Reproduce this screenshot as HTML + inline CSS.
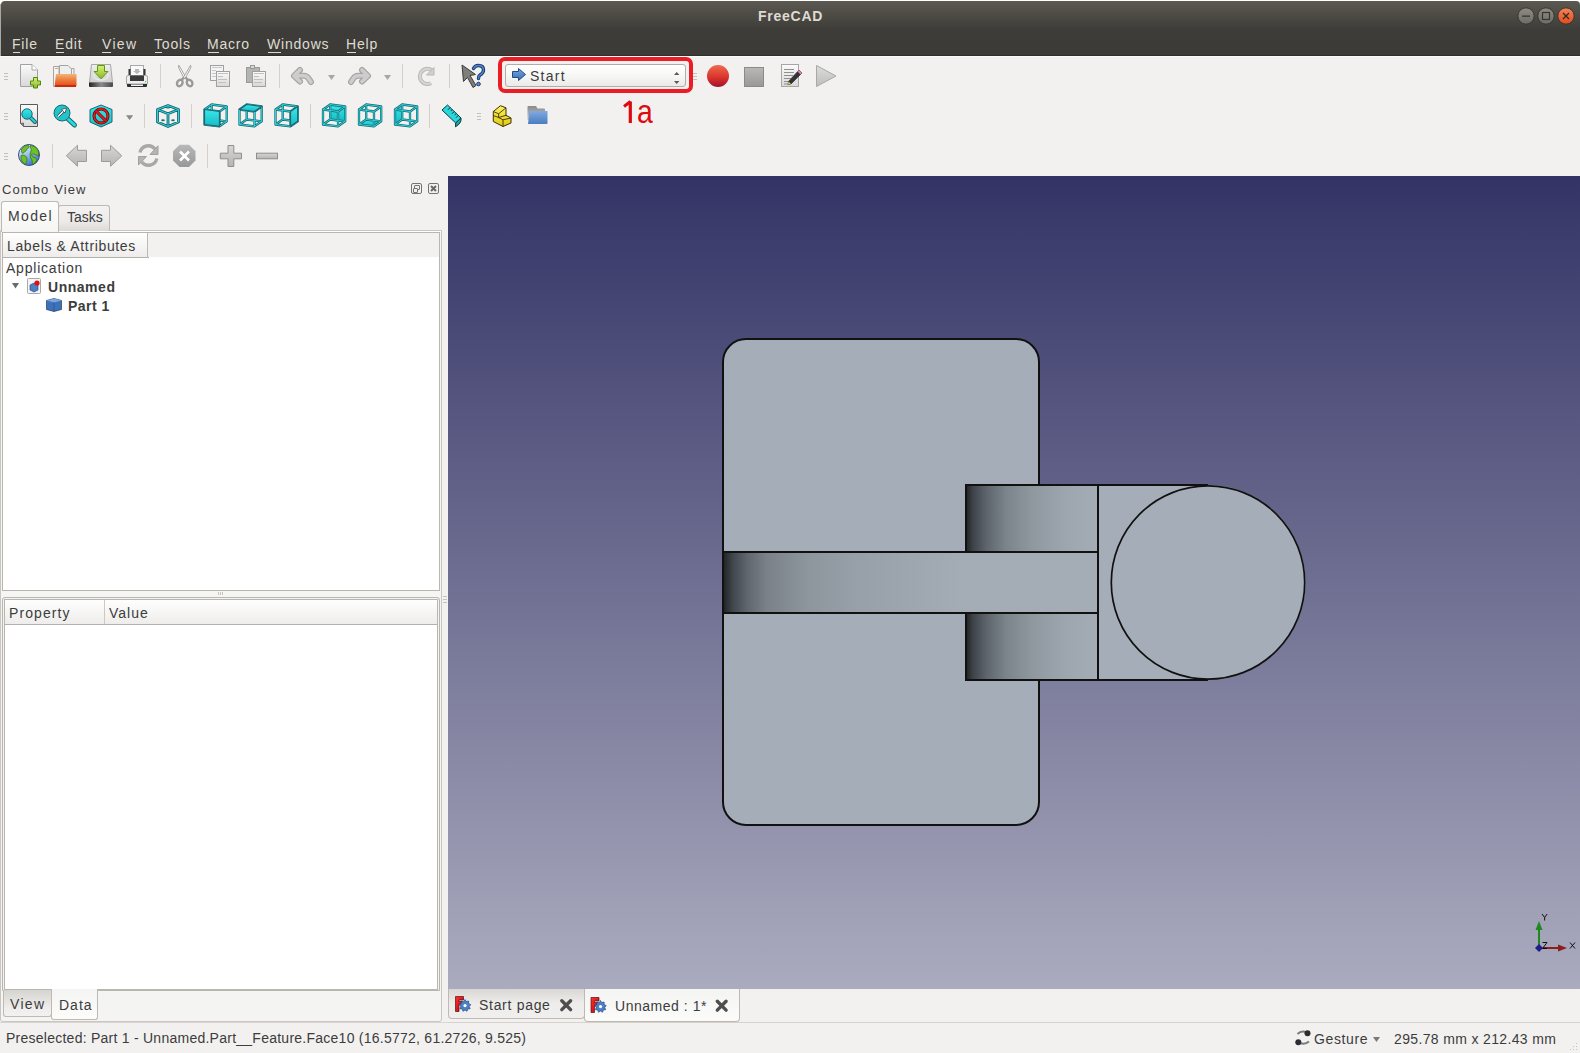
<!DOCTYPE html>
<html><head><meta charset="utf-8">
<style>
*{margin:0;padding:0;box-sizing:border-box;}
html,body{width:1580px;height:1053px;overflow:hidden;background:#fff;}
body{font-family:"Liberation Sans",sans-serif;position:relative;}
.a{position:absolute;}
.t{position:absolute;white-space:nowrap;line-height:1;color:#3c3c3c;}
#title{left:1px;top:1px;width:1579px;height:55px;border-radius:4px 4px 0 0;
 background:linear-gradient(#5b5950 0px,#4d4b45 14px,#3d3c38 29px,#3c3b37 55px);}
#tb{left:0;top:56px;width:1580px;height:120px;background:#f2f1f0;}
#left{left:0;top:176px;width:448px;height:846px;background:#f2f1f0;}
#view{left:448px;top:176px;width:1132px;height:813px;background:linear-gradient(#333366,#ababbf);}
#tabbar{left:448px;top:989px;width:1132px;height:33px;background:#f2f1f0;}
#status{left:0;top:1022px;width:1580px;height:31px;background:#f2f1f0;border-top:1px solid #d9d6d1;}
.menu{color:#dfdbd2;font-size:14px;letter-spacing:0.8px;}
.u{position:absolute;height:1px;background:#dfdbd2;top:52px;}

.ln{position:absolute;background:#b9b5af;}
.hdr{background:linear-gradient(#fefefe,#eeedeb);}
</style></head><body>
<div id="title" class="a"></div>
<div id="tb" class="a"></div>
<div class="a" style="left:0;top:4px;width:1px;height:52px;background:#a9a8a4;"></div>
<div class="a" style="left:1px;top:55px;width:1579px;height:1px;background:#2f2e2b;"></div>
<div class="a" style="left:0;top:56px;width:1580px;height:1px;background:#fbfbfa;"></div>

<div id="left" class="a"></div>
<div id="view" class="a"></div>
<div id="tabbar" class="a"></div>
<div id="status" class="a"></div>


<!-- left panel structure -->
<div class="a" style="left:0;top:230px;width:442px;height:792px;border:1px solid #c9c6c1;border-radius:0 0 3px 3px;background:#f4f4f3;"></div>
<div class="a" style="left:1px;top:231px;width:440px;height:1px;background:#fff;"></div>
<!-- Model tab -->
<div class="a" style="left:1px;top:201px;width:58px;height:31px;border:1px solid #bdb9b3;border-bottom:none;border-radius:3px 3px 0 0;background:linear-gradient(#fcfcfb,#f5f5f4);"></div>
<!-- Tasks tab -->
<div class="a" style="left:58px;top:205px;width:52px;height:26px;border:1px solid #bdb9b3;border-bottom:none;border-radius:3px 3px 0 0;background:linear-gradient(#f4f3f2 0%,#ecebe9 60%,#dcdad6 100%);"></div>
<!-- tree frame -->
<div class="a" style="left:2px;top:232px;width:438px;height:359px;border:1px solid #b9b5af;background:#fff;"></div>
<div class="a" style="left:3px;top:233px;width:436px;height:24px;background:#f2f1f0;"></div>
<div class="a hdr" style="left:3px;top:233px;width:145px;height:24px;border-right:1px solid #bdb9b3;"></div>
<div class="a" style="left:3px;top:257px;width:146px;height:1px;background:#b4b0aa;"></div>
<!-- splitter -->
<div class="a" style="left:1px;top:591px;width:440px;height:6px;background:#f5f5f4;"></div>
<div class="a" style="left:218px;top:592px;width:1px;height:3px;background:#c8c5c0;"></div>
<div class="a" style="left:220px;top:592px;width:1px;height:3px;background:#c8c5c0;"></div>
<div class="a" style="left:222px;top:592px;width:1px;height:3px;background:#c8c5c0;"></div>
<!-- property frame -->
<div class="a" style="left:2px;top:597px;width:438px;height:394px;border:1px solid #b9b5af;border-radius:3px 3px 0 0;background:#f4f4f3;"></div>
<div class="a" style="left:4px;top:599px;width:434px;height:391px;border:1px solid #b9b5af;background:#fff;"></div>
<div class="a hdr" style="left:5px;top:600px;width:432px;height:24px;"></div>
<div class="a" style="left:5px;top:624px;width:432px;height:1px;background:#b4b0aa;"></div>
<div class="a" style="left:104px;top:600px;width:1px;height:24px;background:#ccc9c4;"></div>
<!-- bottom tabs -->
<div class="a" style="left:3px;top:990px;width:49px;height:27px;border:1px solid #bdb9b3;border-top:none;border-radius:0 0 3px 3px;background:linear-gradient(#d6d4d0,#efeeec 70%,#f2f1f0);"></div>
<div class="a" style="left:51px;top:989px;width:47px;height:31px;border:1px solid #bdb9b3;border-top:none;border-radius:0 0 3px 3px;background:linear-gradient(#f4f4f3,#fcfcfb);"></div>
<!-- dock title buttons -->
<div class="a" style="left:411px;top:183px;width:11px;height:11px;border:1px solid #77746f;border-radius:2px;"></div>
<div class="a" style="left:414px;top:185px;width:6px;height:5px;border:1px solid #77746f;border-radius:1px;"></div>
<div class="a" style="left:413px;top:188px;width:5px;height:5px;border:1px solid #77746f;border-radius:1px;background:#f2f1f0;"></div>
<div class="a" style="left:428px;top:183px;width:11px;height:11px;border:1px solid #77746f;border-radius:2px;"></div>
<svg class="a" style="left:428px;top:183px;" width="11" height="11"><path d="M3 3L8 8M8 3L3 8" stroke="#6b6863" stroke-width="2"/></svg>
<!-- panel right splitter grip -->
<div class="a" style="left:443px;top:596px;width:4px;height:1px;background:#c4c1bc;"></div>
<div class="a" style="left:443px;top:599px;width:4px;height:1px;background:#c4c1bc;"></div>
<div class="a" style="left:443px;top:602px;width:4px;height:1px;background:#c4c1bc;"></div>
<!-- 3D view tabs -->
<div class="a" style="left:448px;top:989px;width:137px;height:30px;border:1px solid #bdb9b3;border-top:none;border-radius:0 0 4px 4px;background:linear-gradient(#d9d7d3,#eeedeb 50%,#f0efed);"></div>
<div class="a" style="left:584px;top:989px;width:156px;height:33px;border:1px solid #bdb9b3;border-top:none;border-radius:0 0 4px 4px;background:linear-gradient(#f4f4f3,#fbfbfa);"></div>
<div class="a" style="left:448px;top:1022px;width:1132px;height:1px;background:#d5d2cd;"></div>


<!-- 3D model -->
<svg class="a" style="left:0;top:0;" width="1580" height="1053" viewBox="0 0 1580 1053">
<defs>
<linearGradient id="gs" gradientUnits="userSpaceOnUse" x1="723" y1="0" x2="965" y2="0">
<stop offset="0" stop-color="#1f2224"/>
<stop offset="0.04" stop-color="#41464b"/>
<stop offset="0.1" stop-color="#5f666e"/>
<stop offset="0.18" stop-color="#7a8189"/>
<stop offset="0.35" stop-color="#8d959d"/>
<stop offset="0.55" stop-color="#97a0a8"/>
<stop offset="1" stop-color="#a4adb6"/>
</linearGradient>
<linearGradient id="gc" gradientUnits="userSpaceOnUse" x1="966" y1="0" x2="1098" y2="0">
<stop offset="0" stop-color="#1f2224"/>
<stop offset="0.05" stop-color="#3d4247"/>
<stop offset="0.15" stop-color="#5c636b"/>
<stop offset="0.3" stop-color="#7b838b"/>
<stop offset="0.5" stop-color="#8f979f"/>
<stop offset="0.75" stop-color="#9da6ae"/>
<stop offset="1" stop-color="#a4adb6"/>
</linearGradient>
</defs>
<rect x="723" y="339" width="316" height="486" rx="23" ry="23" fill="#a5aeb8" stroke="#111" stroke-width="2"/>
<path d="M966 485 H1208 A97.5 97.5 0 0 1 1208 680 H966 Z" fill="#a5aeb8"/>
<path d="M965 485 H1208 M965 680 H1208" stroke="#111" stroke-width="2"/>
<rect x="967" y="486" width="130" height="65" fill="url(#gc)"/>
<rect x="967" y="614" width="130" height="65" fill="url(#gc)"/>
<rect x="724" y="553" width="373" height="59" fill="url(#gs)"/>
<g fill="none" stroke="#111" stroke-width="2">
<path d="M722 552 H1098 M722 613 H1098 M1098 484 V681 M966 485 V552 M966 613 V680 M723 552 V613"/>
</g>
<circle cx="1208" cy="582.5" r="96.7" fill="none" stroke="#111" stroke-width="1.7"/>
</svg>

<svg class="a" style="left:0;top:0;" width="1580" height="200" viewBox="0 0 1580 200">
<defs>
<linearGradient id="pg" x1="0" y1="0" x2="0" y2="1"><stop offset="0" stop-color="#fbfbfb"/><stop offset="1" stop-color="#d8d8d8"/></linearGradient>
<linearGradient id="grn" x1="0" y1="0" x2="0" y2="1"><stop offset="0" stop-color="#d8f070"/><stop offset="1" stop-color="#8ab828"/></linearGradient>
<linearGradient id="org" x1="0" y1="0" x2="0" y2="1"><stop offset="0" stop-color="#f2b47a"/><stop offset="0.5" stop-color="#ec7a3a"/><stop offset="1" stop-color="#e2481a"/></linearGradient>
<linearGradient id="drv" x1="0" y1="0" x2="0" y2="1"><stop offset="0" stop-color="#f0f0f0"/><stop offset="1" stop-color="#cfcfcf"/></linearGradient>
<linearGradient id="drb" x1="0" y1="0" x2="1" y2="0"><stop offset="0" stop-color="#222"/><stop offset="0.5" stop-color="#8a8a8a"/><stop offset="1" stop-color="#4a4a4a"/></linearGradient>
<linearGradient id="gry" x1="0" y1="0" x2="0" y2="1"><stop offset="0" stop-color="#d6d6d6"/><stop offset="1" stop-color="#b4b4b4"/></linearGradient>
<linearGradient id="rec" x1="0" y1="0" x2="0" y2="1"><stop offset="0" stop-color="#ee6a50"/><stop offset="0.6" stop-color="#d8302a"/><stop offset="1" stop-color="#a01030"/></linearGradient>
<linearGradient id="stp" x1="0" y1="0" x2="0" y2="1"><stop offset="0" stop-color="#b8b8b8"/><stop offset="1" stop-color="#989898"/></linearGradient>
<linearGradient id="ply" x1="0" y1="0" x2="0" y2="1"><stop offset="0" stop-color="#dcdcdc"/><stop offset="1" stop-color="#bdbdbd"/></linearGradient>
<linearGradient id="blu" x1="0" y1="0" x2="0" y2="1"><stop offset="0" stop-color="#7aa8e0"/><stop offset="1" stop-color="#3a6ab0"/></linearGradient>
<linearGradient id="glb" x1="0.2" y1="0.1" x2="0.7" y2="1"><stop offset="0" stop-color="#e8f2fc"/><stop offset="0.5" stop-color="#8ab8e8"/><stop offset="1" stop-color="#2a68b8"/></linearGradient>
<linearGradient id="tl" x1="0" y1="0" x2="0" y2="1"><stop offset="0" stop-color="#3ae4ea"/><stop offset="1" stop-color="#14b8c0"/></linearGradient>
<linearGradient id="fld" x1="0" y1="0" x2="0" y2="1"><stop offset="0" stop-color="#80aae0"/><stop offset="1" stop-color="#4a7cc0"/></linearGradient>
<linearGradient id="fldb" x1="0" y1="0" x2="0" y2="1"><stop offset="0" stop-color="#8a8a8a"/><stop offset="1" stop-color="#c8c8c8"/></linearGradient>
<linearGradient id="yel" x1="0" y1="0" x2="0" y2="1"><stop offset="0" stop-color="#fff060"/><stop offset="1" stop-color="#e0c810"/></linearGradient>
</defs>
<!-- grips -->
<g fill="#c3c0bb">
<rect x="4" y="73" width="4" height="1"/><rect x="4" y="76" width="4" height="1"/><rect x="4" y="79" width="4" height="1"/>
<rect x="4" y="113" width="4" height="1"/><rect x="4" y="116" width="4" height="1"/><rect x="4" y="119" width="4" height="1"/>
<rect x="4" y="153" width="4" height="1"/><rect x="4" y="156" width="4" height="1"/><rect x="4" y="159" width="4" height="1"/>
<rect x="477" y="113" width="4" height="1"/><rect x="477" y="116" width="4" height="1"/><rect x="477" y="119" width="4" height="1"/>
<rect x="693" y="73" width="4" height="1"/><rect x="693" y="76" width="4" height="1"/><rect x="693" y="79" width="4" height="1"/>
</g>
<!-- separators -->
<g fill="#d3d0cb">
<rect x="160" y="64" width="1" height="24"/><rect x="279" y="64" width="1" height="24"/><rect x="402" y="64" width="1" height="24"/><rect x="449" y="64" width="1" height="24"/>
<rect x="144" y="104" width="1" height="24"/><rect x="191" y="104" width="1" height="24"/><rect x="310" y="104" width="1" height="24"/><rect x="429" y="104" width="1" height="24"/>
<rect x="52" y="144" width="1" height="24"/><rect x="207" y="144" width="1" height="24"/>
</g>
<!-- New -->
<path d="M20.5 64.5 H32 L37.5 70 V86.5 H20.5 Z" fill="url(#pg)" stroke="#a2a2a2"/>
<path d="M32 64.5 V70 H37.5" fill="#fff" stroke="#a8a8a8"/>
<path d="M33.5 77.5 H37.5 V81 H40.5 V85 H37.5 V88 H33.5 V85 H30.5 V81 H33.5 Z" fill="url(#grn)" stroke="#4e8a10"/>
<!-- Open -->
<path d="M53.5 66.5 H59 V86.5 H53.5 Z" fill="#f4f4f4" stroke="#a4a4a4"/>
<rect x="55" y="68" width="3" height="1" fill="#f0a040"/>
<path d="M59.5 65.5 H68 L71.5 69 V76 H59.5 Z" fill="#eeeeee" stroke="#a4a4a4"/>
<path d="M71.5 68.5 H74 V76" fill="none" stroke="#a4a4a4"/>
<path d="M56 74 H76.5 V85.5 Q76.5 86.5 75.5 86.5 H54.5 Z" fill="url(#org)"/>
<rect x="55" y="85" width="21" height="2" fill="#c82a10"/>
<!-- Save -->
<path d="M91.5 64.5 H110.5 L112.5 82.5 H89.5 Z" fill="url(#drv)" stroke="#a8a8a8"/>
<path d="M89 82.5 H113 V86 Q113 87 112 87 H90 Q89 87 89 86 Z" fill="url(#drb)"/>
<ellipse cx="101" cy="76" rx="7" ry="4" fill="none" stroke="#e8e8e8" stroke-width="1.5"/>
<path d="M97.5 65.5 H104.5 V71.5 H108 L101 78.8 L94 71.5 H97.5 Z" fill="url(#grn)" stroke="#5a9a10"/>
<!-- Print -->
<rect x="130.5" y="65.5" width="13" height="10" fill="#fafafa" stroke="#a8a8a8"/>
<path d="M135 69 H139 V71 H141 L137 74 L133 71 H135 Z" fill="#b8b8b8"/>
<rect x="128.5" y="69" width="2" height="6" fill="#333"/><rect x="143.5" y="69" width="2" height="6" fill="#333"/>
<path d="M126.5 77 Q126.5 75.5 128 75.5 H146 Q147.5 75.5 147.5 77 V84 H126.5 Z" fill="#eeeeee" stroke="#a8a8a8"/>
<rect x="130" y="75.5" width="14" height="5.5" fill="#3a3a3a"/>
<path d="M127 84 H147 V86 Q147 87 146 87 H128 Q127 87 127 86 Z" fill="#2e2e2e"/>
<rect x="131" y="84.5" width="12" height="1.5" fill="#f4f4f4"/>
<rect x="145" y="81" width="1.2" height="1.2" fill="#50d030"/>
<!-- Cut -->
<path d="M178.8 65.2 Q178 66.5 179 68.5 L184.2 78.5 L186.2 77.8 Z" fill="#f8f8f8" stroke="#9c9c9c" stroke-width="0.9" stroke-linejoin="round"/>
<path d="M190.6 65.2 Q191.4 66.5 190.4 68.5 L185.2 78.5 L183.2 77.8 Z" fill="#f8f8f8" stroke="#9c9c9c" stroke-width="0.9" stroke-linejoin="round"/>
<g fill="none" stroke="#9a9a9a" stroke-width="2.4">
<ellipse cx="179.8" cy="83" rx="2.6" ry="3.4" transform="rotate(30 179.8 83)"/>
<ellipse cx="189.6" cy="83" rx="2.6" ry="3.4" transform="rotate(-30 189.6 83)"/>
<path d="M181.5 79.8 L184 77.5 M187.9 79.8 L185.4 77.5"/>
</g>
<!-- Copy -->
<rect x="210.5" y="65.5" width="13" height="15" fill="#f4f4f4" stroke="#a0a0a0"/>
<g stroke="#c8c8c8"><path d="M212 67.5 H222 M212 70.5 H216 M212 73.5 H216 M212 76.5 H216"/></g>
<rect x="216.5" y="71.5" width="13" height="15" fill="url(#pg)" stroke="#a0a0a0"/>
<g stroke="#c0c0c0"><path d="M218 73.5 H228 M218 76.5 H223 M218 79.5 H227 M218 82.5 H226"/></g>
<!-- Paste -->
<rect x="246.5" y="67.5" width="13" height="15" fill="#b4b4b4" stroke="#999"/>
<rect x="250.5" y="65.5" width="4" height="3" fill="#d8d8d8" stroke="#999"/>
<rect x="252.5" y="71.5" width="13" height="15" fill="url(#pg)" stroke="#a0a0a0"/>
<g stroke="#c0c0c0"><path d="M254 73.5 H264 M254 76.5 H259 M254 79.5 H263 M254 82.5 H262"/></g>
<!-- Undo / Redo -->
<g fill="none" stroke-linecap="round" stroke-linejoin="round">
<path d="M300 70 L294 75.8 L300 81.5 M295 75.8 H304 Q307 75.8 309 79 L311 82" stroke="#a6a6a6" stroke-width="6"/>
<path d="M300 70 L294 75.8 L300 81.5 M295 75.8 H304 Q307 75.8 309 79 L311 82" stroke="#cdcdcd" stroke-width="3.6"/>
<path d="M362 70 L368 75.8 L362 81.5 M367 75.8 H358 Q355 75.8 353 79 L351 82" stroke="#a6a6a6" stroke-width="6"/>
<path d="M362 70 L368 75.8 L362 81.5 M367 75.8 H358 Q355 75.8 353 79 L351 82" stroke="#cdcdcd" stroke-width="3.6"/>
</g>
<path d="M328 75 H335 L331.5 80 Z" fill="#aaa7a3"/>
<path d="M384 75 H391 L387.5 80 Z" fill="#aaa7a3"/>
<!-- Refresh (disabled) -->
<path d="M432 70.5 A7.5 7.5 0 1 0 431 83" fill="none" stroke="#b8b8b8" stroke-width="4.2"/>
<path d="M432 70.5 A7.5 7.5 0 1 0 431 83" fill="none" stroke="#d4d4d4" stroke-width="2.2"/>
<path d="M434 67.5 V75 H426.5 Z" fill="#cfcfcf" stroke="#b8b8b8" stroke-linejoin="round"/>
<!-- What's this -->
<path d="M462 65 L475.5 74.5 L470 75.5 L476 85.5 L473 87.5 L467.5 77.5 L463.5 81.5 Z" fill="#7e7e7a" stroke="#3a3a38" stroke-linejoin="round"/>
<path d="M473.5 68.5 Q475 65.5 478.5 65.5 Q483.5 65.5 483.5 70 Q483.5 73 480 75 Q478.5 76 478.5 78.5" fill="none" stroke="#1a3a70" stroke-width="3.4" stroke-linecap="round"/>
<path d="M473.5 68.5 Q475 65.5 478.5 65.5 Q483.5 65.5 483.5 70 Q483.5 73 480 75 Q478.5 76 478.5 78.5" fill="none" stroke="#4f86cc" stroke-width="1.3" stroke-linecap="round"/>
<circle cx="478.5" cy="84" r="1.8" fill="#5a8ed0" stroke="#1a3a70"/>
<!-- Record / Stop / Editor / Play -->
<circle cx="718" cy="76" r="11" fill="url(#rec)"/>
<rect x="744.5" y="67.5" width="19" height="19" fill="url(#stp)" stroke="#8a8a8a"/>
<rect x="781.5" y="64.5" width="17" height="22" fill="url(#pg)" stroke="#a6a6a6"/>
<g stroke="#909090"><path d="M784 69.5 H794 M784 72.5 H794 M784 75.5 H793 M784 78.5 H791 M784 81.5 H789 M784 84 H788"/></g>
<path d="M799 70 L802 73 L791 84 L788 84.5 L788.5 81.5 Z" fill="#333" stroke="#222" stroke-width="0.6"/>
<path d="M799 70 L802 73 L800.5 74.5 L797.5 71.5 Z" fill="#e080c0"/>
<path d="M788 84.5 L788.5 81.5 L791 84 Z" fill="#f0d060"/>
<path d="M816.5 65.5 L836 76 L816.5 86.5 Z" fill="url(#ply)" stroke="#a8a8a8" stroke-linejoin="round"/>
</svg>
<svg class="a" style="left:0;top:0;" width="1580" height="200" viewBox="0 0 1580 200">
<defs>
<linearGradient id="tl2" x1="0" y1="0" x2="0" y2="1"><stop offset="0" stop-color="#3ae6ec"/><stop offset="1" stop-color="#16bcc4"/></linearGradient>
</defs>
<!-- Fit all -->
<path d="M20.5 104.5 H37.5 V126.5 H23.5 L20.5 123.5 Z" fill="url(#pg)" stroke="#5a5a5a"/>
<path d="M20.5 123.5 L23.5 123 V126.5" fill="#888" stroke="#5a5a5a" stroke-width="0.8"/>
<path d="M30.5 117.5 L35 122" stroke="#1a6870" stroke-width="4" stroke-linecap="round"/>
<path d="M30.5 117.5 L35 122" stroke="#28d0d6" stroke-width="2" stroke-linecap="round"/>
<circle cx="27" cy="114" r="5.2" fill="url(#tl2)" stroke="#1a6870"/>
<!-- Fit selection -->
<path d="M67.5 118.5 L74.5 125" stroke="#1a6870" stroke-width="5" stroke-linecap="round"/>
<path d="M67.5 118.5 L74.5 125" stroke="#28d8de" stroke-width="3" stroke-linecap="round"/>
<circle cx="62" cy="113" r="8" fill="#22c4cc" stroke="#1a6870"/>
<path d="M58 116.5 L64 110.5" stroke="#333" stroke-width="2.6"/>
<path d="M58 116.5 L64 110.5" stroke="#fff" stroke-width="1.4"/>
<path d="M66.5 108 L61.5 109.5 L65 113 Z" fill="#fff" stroke="#333" stroke-width="0.7"/>
<!-- Draw style -->
<path d="M101 105 L112 109.5 V122 L101 127 L90 122 V109.5 Z" fill="url(#tl2)" stroke="#1a6870"/>
<circle cx="101" cy="116" r="7" fill="none" stroke="#500" stroke-width="3"/>
<circle cx="101" cy="116" r="7" fill="none" stroke="#e01818" stroke-width="1.8"/>
<path d="M95.5 110.5 L106.5 121.5" stroke="#500" stroke-width="3"/>
<path d="M95.5 110.5 L106.5 121.5" stroke="#e01818" stroke-width="1.8"/>
<path d="M126 115.2 H133.2 L129.6 120 Z" fill="#8a8784"/>
<!-- Iso cube -->
<g fill="none" stroke-linejoin="round">
<path d="M168 105.5 L178.5 109.5 V122 L168 126.5 L157.5 122 V109.5 Z M157.5 109.5 L168 113.8 L178.5 109.5 M168 105.5 V108.5 M168 113.8 V126.5" stroke="#1a6870" stroke-width="2.8"/>
<path d="M168 105.5 L178.5 109.5 V122 L168 126.5 L157.5 122 V109.5 Z M157.5 109.5 L168 113.8 L178.5 109.5 M168 105.5 V108.5 M168 113.8 V126.5" stroke="#2ad4dc" stroke-width="1"/>
</g>
<ellipse cx="163" cy="120.3" rx="1.8" ry="1" fill="#1a6870"/><ellipse cx="173" cy="120.3" rx="1.8" ry="1" fill="#1a6870"/>
<path d="M204.5 109.5 L219.5 111.5 M211.7 104.5 L226.7 106.5 M204.5 109.5 L211.7 104.5 M219.5 111.5 L219.5 126.3 M226.7 106.5 L226.7 121.3 M219.5 111.5 L226.7 106.5 M219.5 126.3 L204.5 124.5 M226.7 121.3 L211.7 119.5 M219.5 126.3 L226.7 121.3 M204.5 124.5 L204.5 109.5 M211.7 119.5 L211.7 104.5 M204.5 124.5 L211.7 119.5" stroke="#1a6870" stroke-width="2.3" stroke-linecap="round" fill="none"/><path d="M204.5 109.5 L219.5 111.5 M211.7 104.5 L226.7 106.5 M204.5 109.5 L211.7 104.5 M219.5 111.5 L219.5 126.3 M226.7 106.5 L226.7 121.3 M219.5 111.5 L226.7 106.5 M219.5 126.3 L204.5 124.5 M226.7 121.3 L211.7 119.5 M219.5 126.3 L226.7 121.3 M204.5 124.5 L204.5 109.5 M211.7 119.5 L211.7 104.5 M204.5 124.5 L211.7 119.5" stroke="#2ad4dc" stroke-width="1" fill="none"/><polygon points="204.5,109.5 219.5,111.5 219.5,126.3 204.5,124.5" fill="url(#tl2)" stroke="#1a6870" stroke-width="1.2" stroke-linejoin="round"/>
<path d="M239.5 109.5 L254.5 111.5 M246.7 104.5 L261.7 106.5 M239.5 109.5 L246.7 104.5 M254.5 111.5 L254.5 126.3 M261.7 106.5 L261.7 121.3 M254.5 111.5 L261.7 106.5 M254.5 126.3 L239.5 124.5 M261.7 121.3 L246.7 119.5 M254.5 126.3 L261.7 121.3 M239.5 124.5 L239.5 109.5 M246.7 119.5 L246.7 104.5 M239.5 124.5 L246.7 119.5" stroke="#1a6870" stroke-width="2.3" stroke-linecap="round" fill="none"/><path d="M239.5 109.5 L254.5 111.5 M246.7 104.5 L261.7 106.5 M239.5 109.5 L246.7 104.5 M254.5 111.5 L254.5 126.3 M261.7 106.5 L261.7 121.3 M254.5 111.5 L261.7 106.5 M254.5 126.3 L239.5 124.5 M261.7 121.3 L246.7 119.5 M254.5 126.3 L261.7 121.3 M239.5 124.5 L239.5 109.5 M246.7 119.5 L246.7 104.5 M239.5 124.5 L246.7 119.5" stroke="#2ad4dc" stroke-width="1" fill="none"/><polygon points="239.5,109.5 254.5,111.5 261.7,106.5 246.7,104.5" fill="url(#tl2)" stroke="#1a6870" stroke-width="1.2" stroke-linejoin="round"/>
<path d="M275.5 109.5 L290.5 111.5 M282.7 104.5 L297.7 106.5 M275.5 109.5 L282.7 104.5 M290.5 111.5 L290.5 126.3 M297.7 106.5 L297.7 121.3 M290.5 111.5 L297.7 106.5 M290.5 126.3 L275.5 124.5 M297.7 121.3 L282.7 119.5 M290.5 126.3 L297.7 121.3 M275.5 124.5 L275.5 109.5 M282.7 119.5 L282.7 104.5 M275.5 124.5 L282.7 119.5" stroke="#1a6870" stroke-width="2.3" stroke-linecap="round" fill="none"/><path d="M275.5 109.5 L290.5 111.5 M282.7 104.5 L297.7 106.5 M275.5 109.5 L282.7 104.5 M290.5 111.5 L290.5 126.3 M297.7 106.5 L297.7 121.3 M290.5 111.5 L297.7 106.5 M290.5 126.3 L275.5 124.5 M297.7 121.3 L282.7 119.5 M290.5 126.3 L297.7 121.3 M275.5 124.5 L275.5 109.5 M282.7 119.5 L282.7 104.5 M275.5 124.5 L282.7 119.5" stroke="#2ad4dc" stroke-width="1" fill="none"/><polygon points="290.5,111.5 297.7,106.5 297.7,121.3 290.5,126.3" fill="url(#tl2)" stroke="#1a6870" stroke-width="1.2" stroke-linejoin="round"/>
<polygon points="330.2,104.5 345.2,106.5 345.2,121.3 330.2,119.5" fill="url(#tl2)"/><path d="M323.0 109.5 L338.0 111.5 M330.2 104.5 L345.2 106.5 M323.0 109.5 L330.2 104.5 M338.0 111.5 L338.0 126.3 M345.2 106.5 L345.2 121.3 M338.0 111.5 L345.2 106.5 M338.0 126.3 L323.0 124.5 M345.2 121.3 L330.2 119.5 M338.0 126.3 L345.2 121.3 M323.0 124.5 L323.0 109.5 M330.2 119.5 L330.2 104.5 M323.0 124.5 L330.2 119.5" stroke="#1a6870" stroke-width="2.3" stroke-linecap="round" fill="none"/><path d="M323.0 109.5 L338.0 111.5 M330.2 104.5 L345.2 106.5 M323.0 109.5 L330.2 104.5 M338.0 111.5 L338.0 126.3 M345.2 106.5 L345.2 121.3 M338.0 111.5 L345.2 106.5 M338.0 126.3 L323.0 124.5 M345.2 121.3 L330.2 119.5 M338.0 126.3 L345.2 121.3 M323.0 124.5 L323.0 109.5 M330.2 119.5 L330.2 104.5 M323.0 124.5 L330.2 119.5" stroke="#2ad4dc" stroke-width="1" fill="none"/>
<polygon points="359.0,124.5 374.0,126.3 381.2,121.3 366.2,119.5" fill="url(#tl2)"/><path d="M359.0 109.5 L374.0 111.5 M366.2 104.5 L381.2 106.5 M359.0 109.5 L366.2 104.5 M374.0 111.5 L374.0 126.3 M381.2 106.5 L381.2 121.3 M374.0 111.5 L381.2 106.5 M374.0 126.3 L359.0 124.5 M381.2 121.3 L366.2 119.5 M374.0 126.3 L381.2 121.3 M359.0 124.5 L359.0 109.5 M366.2 119.5 L366.2 104.5 M359.0 124.5 L366.2 119.5" stroke="#1a6870" stroke-width="2.3" stroke-linecap="round" fill="none"/><path d="M359.0 109.5 L374.0 111.5 M366.2 104.5 L381.2 106.5 M359.0 109.5 L366.2 104.5 M374.0 111.5 L374.0 126.3 M381.2 106.5 L381.2 121.3 M374.0 111.5 L381.2 106.5 M374.0 126.3 L359.0 124.5 M381.2 121.3 L366.2 119.5 M374.0 126.3 L381.2 121.3 M359.0 124.5 L359.0 109.5 M366.2 119.5 L366.2 104.5 M359.0 124.5 L366.2 119.5" stroke="#2ad4dc" stroke-width="1" fill="none"/>
<polygon points="395.0,109.5 402.2,104.5 402.2,119.5 395.0,124.5" fill="url(#tl2)"/><path d="M395.0 109.5 L410.0 111.5 M402.2 104.5 L417.2 106.5 M395.0 109.5 L402.2 104.5 M410.0 111.5 L410.0 126.3 M417.2 106.5 L417.2 121.3 M410.0 111.5 L417.2 106.5 M410.0 126.3 L395.0 124.5 M417.2 121.3 L402.2 119.5 M410.0 126.3 L417.2 121.3 M395.0 124.5 L395.0 109.5 M402.2 119.5 L402.2 104.5 M395.0 124.5 L402.2 119.5" stroke="#1a6870" stroke-width="2.3" stroke-linecap="round" fill="none"/><path d="M395.0 109.5 L410.0 111.5 M402.2 104.5 L417.2 106.5 M395.0 109.5 L402.2 104.5 M410.0 111.5 L410.0 126.3 M417.2 106.5 L417.2 121.3 M410.0 111.5 L417.2 106.5 M410.0 126.3 L395.0 124.5 M417.2 121.3 L402.2 119.5 M410.0 126.3 L417.2 121.3 M395.0 124.5 L395.0 109.5 M402.2 119.5 L402.2 104.5 M395.0 124.5 L402.2 119.5" stroke="#2ad4dc" stroke-width="1" fill="none"/>
<!-- Ruler -->
<path d="M442 110 L447.5 105 L461 118 L455.7 123 Z" fill="#28d8dc" stroke="#0e3a3e" stroke-linejoin="round"/>
<path d="M455.7 123 L461 118 Q462 123 455.5 126.8 Z" fill="#1aa8b0" stroke="#0e3a3e" stroke-linejoin="round"/>
<g stroke="#0e3a3e" stroke-width="1"><path d="M450.2 107.6 L447.9 109.9 M452.2 109.5 L450.7 111.1 M454.2 111.5 L452.0 113.8 M456.3 113.5 L454.7 115.0 M458.3 115.4 L456.0 117.7 "/></g>
<!-- Yellow blocks -->
<path d="M493.3 111.5 L500.5 105.7 L506 107.8 V115.3 L511 118 V123 L503 126.5 L493.3 121.5 Z" fill="url(#yel)" stroke="#3a3200" stroke-linejoin="round"/>
<path d="M493.3 111.5 L498.6 113.8 L506 107.8 M498.6 113.8 V117.5 L503 119.8 L511 118 M498.6 117.5 L493.3 115.5 M503 119.8 V126.5 M498.6 117.5 L506 115.3" fill="none" stroke="#3a3200" stroke-width="0.9"/>
<!-- Folder -->
<path d="M527.5 107 Q527.5 106 528.5 106 H536 L537.5 108.5 H544 Q545 108.5 545 109.5 V120 H527.5 Z" fill="url(#fldb)"/>
<path d="M529.5 111 H547.5 V123 Q547.5 124 546.5 124 H528 Z" fill="url(#fld)"/>
<!-- Globe -->
<circle cx="29" cy="155" r="10.5" fill="url(#glb)" stroke="#3a4a8a"/>
<path d="M21.5 149 Q24 145.5 28 145 Q30 146 29 147.5 L27 149 Q26 151.5 24.5 152 L22.5 153.5 Q21 152 21.5 149 Z" fill="#6cc224" stroke="#2a5a10" stroke-width="0.6"/>
<path d="M30.5 145.2 Q35.5 146 38 150 Q39 153 38.5 156 L35 154.5 Q33 153 31.5 154.5 L33 157 Q36 157 37 160 L33.5 164.5 Q32 163 32 160 L30.5 157.5 Q29.5 154 31 151 Q32 149.5 30.5 148 Z" fill="#6cc224" stroke="#2a5a10" stroke-width="0.6"/>
<path d="M21 155.5 Q23.5 154.5 25.5 156 Q27.5 158 27 160.5 L25.5 164.5 Q22 163 21 159 Z" fill="#6cc224" stroke="#2a5a10" stroke-width="0.6"/>
<!-- Back / Forward -->
<path d="M66.3 155.8 L77.5 145.3 V150.3 H86.5 V161.5 H77.5 V166.3 Z" fill="url(#gry)" stroke="#9c9c9c" stroke-linejoin="round"/>
<path d="M121.8 155.8 L110.5 145.3 V150.3 H101.5 V161.5 H110.5 V166.3 Z" fill="url(#gry)" stroke="#9c9c9c" stroke-linejoin="round"/>
<!-- Refresh 2 -->
<path d="M140 152.5 A8.5 8.5 0 0 1 155 149" fill="none" stroke="#a8a8a8" stroke-width="3.4"/>
<path d="M156.8 158.5 A8.5 8.5 0 0 1 141.8 162" fill="none" stroke="#a8a8a8" stroke-width="3.4"/>
<path d="M158 145.8 V154.5 H150 Z" fill="#b4b4b4" stroke="#a0a0a0" stroke-linejoin="round"/>
<path d="M138.5 165 V156.5 H146.5 Z" fill="#b4b4b4" stroke="#a0a0a0" stroke-linejoin="round"/>
<!-- Stop octagon -->
<path d="M179.5 144.8 H189 L195.5 151.3 V160.5 L189 167 H179.5 L173 160.5 V151.3 Z" fill="url(#stp)"/>
<path d="M180 151.5 L189 160.5 M189 151.5 L180 160.5" stroke="#fff" stroke-width="2.6"/>
<!-- Plus / Minus -->
<path d="M228 145.5 H233.8 V153.2 H241.5 V158.8 H233.8 V166.5 H228 V158.8 H220.3 V153.2 H228 Z" fill="url(#gry)" stroke="#8e8e8e" stroke-linejoin="round"/>
<rect x="256.5" y="153.2" width="21" height="5.6" fill="url(#gry)" stroke="#8e8e8e"/>
</svg>
<!-- combo box -->
<div class="a" style="left:505px;top:64px;width:181px;height:23px;border:1px solid #b1ada6;border-radius:3px;background:linear-gradient(#ffffff,#f7f7f6 50%,#ebeae8);"></div>
<div class="a" style="left:498px;top:57px;width:195px;height:36px;border:4.5px solid #ec1c24;border-radius:7px;"></div>
<svg class="a" style="left:0;top:0;" width="1580" height="1053" viewBox="0 0 1580 1053">
<defs>
<linearGradient id="bt" x1="0" y1="0" x2="0" y2="1"><stop offset="0" stop-color="#8e8b85"/><stop offset="1" stop-color="#6e6c67"/></linearGradient>
<linearGradient id="cl" x1="0" y1="0" x2="0" y2="1"><stop offset="0" stop-color="#f5845a"/><stop offset="1" stop-color="#df4c18"/></linearGradient>
<linearGradient id="fcr" x1="0" y1="0" x2="1" y2="1"><stop offset="0" stop-color="#ff3030"/><stop offset="1" stop-color="#b80808"/></linearGradient>
</defs>
<!-- start arrow -->
<path d="M512.5 71.5 H518.5 V68.5 L525.5 74.5 L518.5 80.5 V77.5 H512.5 Z" fill="url(#blu)" stroke="#1e4a8a" stroke-linejoin="round"/>
<path d="M674 75 L676.7 72 L679.4 75 Z M674 81 L676.7 84 L679.4 81 Z" fill="#5a5a5a"/>
<!-- window buttons -->
<circle cx="1526" cy="16" r="8.2" fill="url(#bt)" stroke="#36352f"/>
<rect x="1522" y="15.5" width="8" height="1.3" fill="#36352f"/>
<circle cx="1546" cy="16" r="8.2" fill="url(#bt)" stroke="#36352f"/>
<rect x="1542.5" y="12.5" width="7" height="7" fill="none" stroke="#36352f" stroke-width="1.2"/>
<circle cx="1566" cy="16" r="8.2" fill="url(#cl)" stroke="#36352f"/>
<path d="M1563 13 L1569 19 M1569 13 L1563 19" stroke="#2a2a20" stroke-width="1.2"/>
<!-- FreeCAD tab icons -->
<g id="fc1">
<path d="M455.5 996.5 H463.5 V1000 H459 V1001.5 H462 V1004.5 H459 V1011.5 H455.5 Z" fill="url(#fcr)" stroke="#5a1010" stroke-width="0.7"/>
<path d="M465 999.5 L466.2 1001.5 L468.6 1001 L468.7 1003.4 L470.8 1004.7 L469.2 1006.5 L470.2 1008.7 L467.8 1009 L467 1011.3 L465 1010 L463 1011.3 L462.2 1009 L459.8 1008.7 L460.8 1006.5 L459.2 1004.7 L461.3 1003.4 L461.4 1001 L463.8 1001.5 Z" fill="#4a80c4" stroke="#1e3a7a" stroke-width="0.6"/>
<circle cx="465" cy="1005.6" r="1.6" fill="#fff"/>
</g>
<g transform="translate(135.5 1)">
<path d="M455.5 996.5 H463.5 V1000 H459 V1001.5 H462 V1004.5 H459 V1011.5 H455.5 Z" fill="url(#fcr)" stroke="#5a1010" stroke-width="0.7"/>
<path d="M465 999.5 L466.2 1001.5 L468.6 1001 L468.7 1003.4 L470.8 1004.7 L469.2 1006.5 L470.2 1008.7 L467.8 1009 L467 1011.3 L465 1010 L463 1011.3 L462.2 1009 L459.8 1008.7 L460.8 1006.5 L459.2 1004.7 L461.3 1003.4 L461.4 1001 L463.8 1001.5 Z" fill="#4a80c4" stroke="#1e3a7a" stroke-width="0.6"/>
<circle cx="465" cy="1005.6" r="1.6" fill="#fff"/>
</g>
<!-- close X on tabs -->
<path d="M561.8 1000.8 L570.6 1009.6 M570.6 1000.8 L561.8 1009.6" stroke="#4e4e4e" stroke-width="3.4" stroke-linecap="round"/>
<path d="M717.3 1001.3 L726.1 1010.1 M726.1 1001.3 L717.3 1010.1" stroke="#4e4e4e" stroke-width="3.4" stroke-linecap="round"/>
<!-- gesture icon -->
<path d="M1297.5 1034 Q1301 1030.5 1306 1032" fill="none" stroke="#7a7a7a" stroke-width="2"/>
<path d="M1309 1041.5 Q1305 1045 1300 1043" fill="none" stroke="#7a7a7a" stroke-width="2"/>
<circle cx="1307.5" cy="1033.3" r="3" fill="#2a2e32"/>
<circle cx="1298.3" cy="1042.2" r="3" fill="#2a2e32"/>
<path d="M1373 1037 H1380 L1376.5 1042 Z" fill="#7a7a7a"/>
<!-- axis -->
<path d="M1539 945 V926" stroke="#1e8a1e" stroke-width="2"/>
<path d="M1539 921 L1542.5 930 H1535.5 Z" fill="#1e8a1e"/>
<path d="M1543 948 H1560" stroke="#8a1e1e" stroke-width="2"/>
<path d="M1567 948 L1558 944.5 V951.5 Z" fill="#8a1e1e"/>
<path d="M1539 944 L1543 948 L1539 952 L1535 948 Z" fill="#1e1e8a"/>
<g stroke="#000" stroke-width="0.9" fill="none">
<path d="M1542 914 L1544.6 917.5 L1547.2 914 M1544.6 917.5 V920.5"/>
<path d="M1542.5 942.5 H1547 L1542.5 948.5 H1547"/>
<path d="M1570 942.5 L1575 948.5 M1575 942.5 L1570 948.5"/>
</g>
<!-- resize grip -->
<g fill="#c8c5c0">
<rect x="1576" y="1049" width="1" height="1"/><rect x="1573" y="1049" width="1" height="1"/><rect x="1576" y="1046" width="1" height="1"/>
<rect x="1570" y="1049" width="1" height="1"/><rect x="1573" y="1046" width="1" height="1"/><rect x="1576" y="1043" width="1" height="1"/>
</g>
<!-- tree icons -->
<path d="M12 283 H19 L15.5 288.5 Z" fill="#6a6a6a"/>
<rect x="27.5" y="278.5" width="13" height="15" rx="1" fill="#f4f4f4" stroke="#a8a8a8"/>
<path d="M30 285 L34 283 L38 285 V290 L34 292 L30 290 Z" fill="#4a80c4" stroke="#1e3a7a" stroke-width="0.6"/>
<circle cx="37" cy="283" r="2.6" fill="#e01010"/>
<path d="M46.5 300.5 L54 298.5 L61.5 300.5 V309.5 L54 311.5 L46.5 309.5 Z" fill="#3e72b8" stroke="#1e3a6a" stroke-width="0.7"/>
<path d="M46.5 300.5 L54 302.5 L61.5 300.5 L54 298.5 Z" fill="#7aa6dc"/>
<path d="M54 302.5 V311.5" stroke="#2a5090" stroke-width="0.7"/>
</svg>
<!-- menu underlines -->
<div class="u" style="left:13px;width:7px;"></div>
<div class="u" style="left:56px;width:8px;"></div>
<div class="u" style="left:102px;width:9px;"></div>
<div class="u" style="left:155px;width:7px;"></div>
<div class="u" style="left:208px;width:11px;"></div>
<div class="u" style="left:268px;width:13px;"></div>
<div class="u" style="left:347px;width:9px;"></div>

<!-- title text -->
<div class="t" style="left:758px;top:9px;font-size:14px;font-weight:bold;color:#dfdbd2;letter-spacing:0.75px;">FreeCAD</div>
<!-- menu -->
<div class="t menu" style="left:12px;top:37px;">File</div>
<div class="t menu" style="left:55px;top:37px;">Edit</div>
<div class="t menu" style="letter-spacing:1.33px;left:102px;top:37px;">View</div>
<div class="t menu" style="left:154px;top:37px;">Tools</div>
<div class="t menu" style="left:207px;top:37px;">Macro</div>
<div class="t menu" style="left:267px;top:37px;">Windows</div>
<div class="t menu" style="left:346px;top:37px;">Help</div>


<!-- combo text -->
<div class="t" id="startTxt" style="letter-spacing:1.25px;left:530px;top:69px;font-size:14px;">Start</div>
<svg class="a" style="left:0;top:0;" width="700" height="140"><path d="M630.3 101.5 V123" stroke="#dd0a10" stroke-width="3.2"/><path d="M624 106.5 L630.5 101.5" stroke="#dd0a10" stroke-width="3"/></svg>
<div class="t" style="left:637px;top:95px;font-size:33px;color:#dd0a10;transform:scaleX(0.86);transform-origin:0 0;">a</div>
<div class="t" style="letter-spacing:1.11px;left:2px;top:183px;font-size:13px;">Combo View</div>
<div class="t" style="letter-spacing:1.35px;left:8px;top:209px;font-size:14px;">Model</div>
<div class="t" style="left:67px;top:210px;font-size:14px;">Tasks</div>
<div class="t" style="letter-spacing:0.64px;left:7px;top:239px;font-size:14px;">Labels &amp; Attributes</div>
<div class="t" style="letter-spacing:0.78px;left:6px;top:261px;font-size:14px;">Application</div>
<div class="t" style="letter-spacing:0.53px;left:48px;top:280px;font-size:14px;font-weight:bold;">Unnamed</div>
<div class="t" style="letter-spacing:0.50px;left:68px;top:299px;font-size:14px;font-weight:bold;">Part 1</div>
<div class="t" style="letter-spacing:1.10px;left:9px;top:606px;font-size:14px;">Property</div>
<div class="t" style="letter-spacing:1.00px;left:109px;top:606px;font-size:14px;">Value</div>
<div class="t" style="letter-spacing:1.33px;left:10px;top:997px;font-size:14px;">View</div>
<div class="t" style="letter-spacing:1.00px;left:59px;top:998px;font-size:14px;">Data</div>
<div class="t" style="letter-spacing:0.70px;left:479px;top:998px;font-size:14px;">Start page</div>
<div class="t" style="letter-spacing:0.53px;left:615px;top:999px;font-size:14px;">Unnamed : 1*</div>
<div class="t" style="letter-spacing:0.25px;left:6px;top:1031px;font-size:14px;">Preselected: Part 1 - Unnamed.Part__Feature.Face10 (16.5772, 61.2726, 9.525)</div>
<div class="t" style="letter-spacing:0.63px;left:1314px;top:1032px;font-size:14px;">Gesture</div>
<div class="t" style="letter-spacing:0.35px;left:1394px;top:1032px;font-size:14px;">295.78 mm x 212.43 mm</div>
</body></html>
